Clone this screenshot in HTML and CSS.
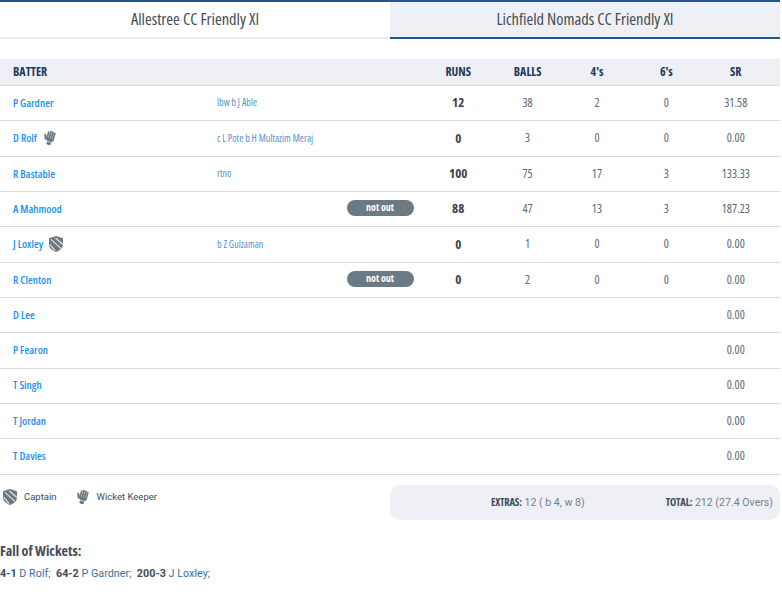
FILE: index.html
```html
<!DOCTYPE html>
<html lang="en">
<head>
<meta charset="utf-8">
<title>Scorecard</title>
<link rel="stylesheet" href="styles.css">
</head>
<body>
<svg class="defs" width="0" height="0" aria-hidden="true">
  <symbol id="shield" viewBox="0 0 14 16">
    <path d="M0 2.200 7 0l7 2.200v6.300C14 12.300 10.500 14.800 7 16 3.500 14.800 0 12.300 0 8.500Z" fill="#6d7880"/>
    <path d="M2 3.400 12.200 12.600M0.800 8.300 6 14.500M6.500 2 13.800 8.500" stroke="#dfe2e4" stroke-width="1.200" fill="none"/>
  </symbol>
  <symbol id="glove" viewBox="0 0 15 16">
    <g fill="#6d7880" transform="rotate(16 7.500 8)">
      <rect x="3.600" y="1.600" width="1.900" height="7"/>
      <rect x="5.800" y="0.500" width="1.900" height="8"/>
      <rect x="8" y="0.500" width="1.900" height="8"/>
      <rect x="10.200" y="1.400" width="1.900" height="7"/>
      <path d="M3.600 8H12.100V10L10.500 12H5.500L3.600 10Z"/>
      <path d="M3.600 7 1.400 4.800.4 5.700 2 10 4 11.500Z"/>
      <path d="M5.200 12.600H10.300L9.900 15C8.500 15.900 6.800 15.900 5.500 15Z"/>
    </g>
  </symbol>
</svg>

<main class="card">
  <nav class="tabs">
    <div class="tab">Allestree CC Friendly XI</div>
    <div class="tab tab-active">Lichfield Nomads CC Friendly XI</div>
  </nav>

  <section class="scorecard">
    <div class="row head">
      <div>BATTER</div><div></div><div class="n">RUNS</div><div class="n">BALLS</div><div class="n">4's</div><div class="n">6's</div><div class="n">SR</div>
    </div>
    <div class="row">
      <a class="name">P Gardner</a><div class="how">lbw b J Able</div><div class="n runs">12</div><div class="n">38</div><div class="n">2</div><div class="n">0</div><div class="n">31.58</div>
    </div>
    <div class="row">
      <a class="name">D Rolf <svg class="ico"><use href="#glove"/></svg></a><div class="how">c L Pote b H Multazim Meraj</div><div class="n runs">0</div><div class="n">3</div><div class="n">0</div><div class="n">0</div><div class="n">0.00</div>
    </div>
    <div class="row">
      <a class="name">R Bastable</a><div class="how">rtno</div><div class="n runs">100</div><div class="n">75</div><div class="n">17</div><div class="n">3</div><div class="n">133.33</div>
    </div>
    <div class="row">
      <a class="name">A Mahmood</a><div class="how"><span class="badge">not out</span></div><div class="n runs">88</div><div class="n">47</div><div class="n">13</div><div class="n">3</div><div class="n">187.23</div>
    </div>
    <div class="row">
      <a class="name">J Loxley <svg class="ico"><use href="#shield"/></svg></a><div class="how">b Z Gulzaman</div><div class="n runs">0</div><div class="n">1</div><div class="n">0</div><div class="n">0</div><div class="n">0.00</div>
    </div>
    <div class="row">
      <a class="name">R Clenton</a><div class="how"><span class="badge">not out</span></div><div class="n runs">0</div><div class="n">2</div><div class="n">0</div><div class="n">0</div><div class="n">0.00</div>
    </div>
    <div class="row"><a class="name">D Lee</a><div></div><div></div><div></div><div></div><div></div><div class="n">0.00</div></div>
    <div class="row"><a class="name">P Fearon</a><div></div><div></div><div></div><div></div><div></div><div class="n">0.00</div></div>
    <div class="row"><a class="name">T Singh</a><div></div><div></div><div></div><div></div><div></div><div class="n">0.00</div></div>
    <div class="row"><a class="name">T Jordan</a><div></div><div></div><div></div><div></div><div></div><div class="n">0.00</div></div>
    <div class="row"><a class="name">T Davies</a><div></div><div></div><div></div><div></div><div></div><div class="n">0.00</div></div>
  </section>

  <section class="foot">
    <div class="legend">
      <span class="key"><svg class="ico-key"><use href="#shield"/></svg>Captain</span>
      <span class="key"><svg class="ico-key"><use href="#glove"/></svg>Wicket Keeper</span>
    </div>
    <div class="summary">
      <span><b>EXTRAS:</b> 12 ( b 4, w 8)</span>
      <span><b>TOTAL:</b> 212 (27.4 Overs)</span>
    </div>
  </section>

  <section class="fow">
    <h3>Fall of Wickets:</h3>
    <p><b>4-1</b> <a>D Rolf;</a>&nbsp; <b>64-2</b> <a>P Gardner;</a>&nbsp; <b>200-3</b> <a>J Loxley;</a></p>
  </section>
</main>
</body>
</html>
```

FILE: styles.css
```css
* { box-sizing: border-box; }
html, body { margin: 0; padding: 0; background: #fff; }
body { font-family: "Open Sans", "Liberation Sans", sans-serif; font-stretch: 75%; }
.defs { position: absolute; }
.card { width: 780px; }

.tabs { display: grid; grid-template-columns: 390px 390px; }
.tab {
  height: 39px;
  border-top: 2px solid #22558f;
  border-bottom: 2px solid #ececec;
  display: flex; align-items: center; justify-content: center;
  font-size: 16.400px; color: #444c55;
  padding-bottom: 2px;
}
.tab-active { background: #eff0f5; border-bottom-color: #22558f; }

.scorecard { margin-top: 20px; }
.row {
  display: grid;
  grid-template-columns: 204px 206.500px repeat(5, 69.400px);
  align-items: center;
  height: 35.330px;
  padding-left: 13px;
  padding-bottom: 1.600px;
  border-bottom: 1.500px solid #dcdcdc;
  font-size: 12px; color: #5d6770;
}
.head {
  height: 27px;
  background: #eff0f5;
  font-weight: 700; color: #1f3a5a;
}
.n { text-align: center; }
.runs { font-weight: 700; color: #3a4148; font-size: 13px; }
.name {
  color: #1e90f0; font-weight: 600; font-size: 11px;
  display: flex; align-items: center; gap: 6px;
}
.ico { width: 14px; height: 16px; }
.how { color: #5a8fc8; font-size: 10px; display: flex; justify-content: flex-start; }
.how:has(.badge) { justify-content: flex-end; }
.badge {
  width: 67px; height: 16px; border-radius: 8px; margin-right: 10px;
  background: #6c7a86; color: #fff; font-size: 10px; font-weight: 700;
  display: flex; align-items: center; justify-content: center;
  padding-bottom: 2px;
}

.foot { display: grid; grid-template-columns: 390px 390px; margin-top: 10px; }
.legend {
  display: flex; gap: 19px; padding: 4px 0 0 3px;
  font-family: Roboto, sans-serif; font-stretch: 100%; font-size: 9.500px; color: #444c55;
  align-items: flex-start;
}
.key { display: flex; align-items: center; gap: 7px; }
.ico-key { width: 14px; height: 16px; }
.summary {
  height: 35px; border-radius: 10px; background: #eff0f5;
  display: flex; justify-content: flex-end; align-items: center; gap: 81px;
  padding-right: 7px;
  font-family: Roboto, sans-serif; font-stretch: 100%; font-size: 10.600px; color: #76808a;
}
.summary b { font-family: "Open Sans", sans-serif; font-stretch: 75%; font-size: 10.500px; letter-spacing: -0.200px; color: #3f4a55; }

.fow { margin-top: 22px; }
.fow h3 { margin: 0; font-size: 14px; line-height: 17px; color: #444c55; font-weight: 700; }
.fow p {
  margin: 8px 0 0; font-family: Roboto, sans-serif; font-stretch: 100%; font-size: 10.800px; line-height: 13px;
  color: #3a6ea5;
}
.fow b { color: #444c55; }
```
